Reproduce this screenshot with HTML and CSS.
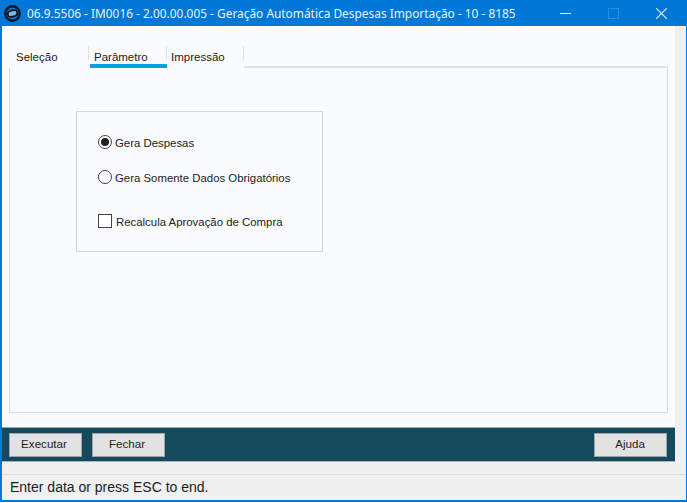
FILE: index.html
```html
<!DOCTYPE html>
<html lang="pt">
<head>
<meta charset="utf-8">
<title>Geração Automática Despesas Importação</title>
<link rel="stylesheet" href="styles.css">
</head>
<body>
<div class="window">
  <header class="titlebar">
    <svg class="logo" width="17" height="17" viewBox="0 0 17 17">
      <circle cx="8.500" cy="8.500" r="7.200" fill="#0078d7" stroke="#0a1422" stroke-width="2.400"/>
      <rect x="3.700" y="5.500" width="9.600" height="6" rx="3" fill="#7fb4e6" stroke="#0a1422" stroke-width="1.700" transform="rotate(-14 8.500 8.500)"/>
    </svg>
    <span class="title">06.9.5506 - IM0016 - 2.00.00.005 - Geração Automática Despesas Importação - 10 - 8185</span>
    <div class="controls">
      <svg class="ctl" width="11" height="11" viewBox="0 0 11 11"><path d="M0 5.500h11" stroke="#e8f2fb" stroke-width="1"/></svg>
      <svg class="ctl" width="11" height="11" viewBox="0 0 11 11"><rect x="0.500" y="0.500" width="10" height="10" fill="none" stroke="#2b8ae0"/></svg>
      <svg class="ctl" width="11" height="11" viewBox="0 0 11 11"><path d="M0.300 0.300l10.400 10.400M10.700 0.300l-10.400 10.400" stroke="#e8f2fb" stroke-width="1.100"/></svg>
    </div>
  </header>
  <div class="client">
    <main class="content">
      <nav class="tabs">
        <div class="tab first">Seleção</div>
        <div class="tab active">Parâmetro</div>
        <div class="tab third">Impressão</div>
        <div class="tab-rest"></div>
      </nav>
      <section class="panel">
        <div class="group">
          <label class="opt"><span class="radio checked"></span><span class="lbl">Gera Despesas</span></label>
          <label class="opt"><span class="radio"></span><span class="lbl">Gera Somente Dados Obrigatórios</span></label>
          <label class="opt check-row"><span class="check"></span><span class="lbl">Recalcula Aprovação de Compra</span></label>
        </div>
      </section>
    </main>
    <aside class="strip"></aside>
  </div>
  <div class="actions-wrap">
    <div class="actions">
      <button class="btn">Executar</button>
      <button class="btn">Fechar</button>
      <button class="btn help">Ajuda</button>
    </div>
  </div>
  <footer class="status">Enter data or press ESC to end.</footer>
</div>
</body>
</html>
```

FILE: styles.css
```css
* { box-sizing: border-box; }
html, body { margin: 0; padding: 0; }
body { width: 687px; height: 503px; overflow: hidden; background: #fff; }
.window {
  width: 687px; height: 502px;
  display: flex; flex-direction: column;
  border: 1px solid #0078d7; border-top: 0; border-bottom-width: 2px;
  border-left-width: 2px;
  background: #f0f0f0;
  font-family: "Liberation Sans", Arial, sans-serif;
  color: #222;
}
.titlebar {
  height: 26px; flex: none;
  margin-left: -2px; margin-right: -1px;
  background: #0078d7; color: #e8f2fb;
  display: flex; align-items: center;
  padding-left: 4px; padding-right: 20px;
}
.logo { flex: none; margin-top: 1px; }
.title {
  margin-left: 6px;
  font: 11.9px "Noto Sans", sans-serif;
  white-space: nowrap;
}
.controls { margin-left: auto; display: flex; gap: 37px; }
.ctl { display: block; flex: none; }
.client { flex: none; height: 401px; display: flex; }
.content { width: 673px; background: #fafbfd; padding: 20px 7px 0 7px; }
.strip { flex: 1; background: #f0f0f0; }
.tabs { display: flex; height: 22px; font-size: 11.5px; line-height: 14px; }
.tab {
  position: relative;
  width: 78px; height: 22px;
  padding: 4px 0 0 5px;
}
.tab::before {
  content: ""; position: absolute;
  right: 0; top: 0; width: 1px; height: 14px;
  background: #dfe1e4;
}
.tab.first { width: 80px; padding-left: 7px; }
.tab.active::after {
  content: ""; position: absolute;
  left: 1px; right: 0; bottom: 0; height: 4px;
  background: #00a1e0;
}
.tab.third { width: 77px; padding-left: 4px; }
.tab-rest { flex: 1; border-bottom: 2px solid #dfe1e4; }
.panel {
  height: 345px;
  border: 1px solid #d9dbde; border-top: 0;
  padding: 43px 0 0 66px;
}
.group {
  width: 247px; height: 141px;
  border: 1px solid #d5d7da;
  padding: 22px 0 0 21px;
  font-size: 11.4px;
}
.opt { display: flex; align-items: center; height: 15px; margin-bottom: 20px; color: #222; }
.lbl { padding-top: 2px; }
.check-row { margin-top: 29px; }
.radio {
  width: 14px; height: 14px; border-radius: 50%;
  border: 1px solid #444; background: #fff; margin-right: 3px;
  flex: none; display: flex; align-items: center; justify-content: center;
}
.radio.checked::after { content: ""; width: 8px; height: 8px; border-radius: 50%; background: #222; }
.check {
  width: 14px; height: 14px; border: 1px solid #444; background: #fff;
  margin-right: 4px; flex: none;
}
.actions-wrap { flex: none; height: 34px; }
.actions {
  height: 35px; margin-right: 11px;
  background: #15495c;
  border-top: 1px solid #9aa7ad; border-bottom: 1px solid #aab4b8;
  display: flex; align-items: center; gap: 10px; padding-left: 7px; padding-right: 8px;
}
.btn {
  width: 73px; height: 24px;
  background: #e2e2e2; color: #222;
  border: 1px solid #a4a4a4;
  font: 11.6px "Liberation Sans", Arial, sans-serif;
  padding: 0 3px 2px 0;
}
.help { margin-left: auto; padding-right: 1px; }
.status {
  flex: none; height: 26px; margin-top: 13px;
  border-top: 1px solid #dcdcdc;
  font-size: 14px; line-height: 25px; padding-left: 8px; color: #1c1c1c;
}
```
